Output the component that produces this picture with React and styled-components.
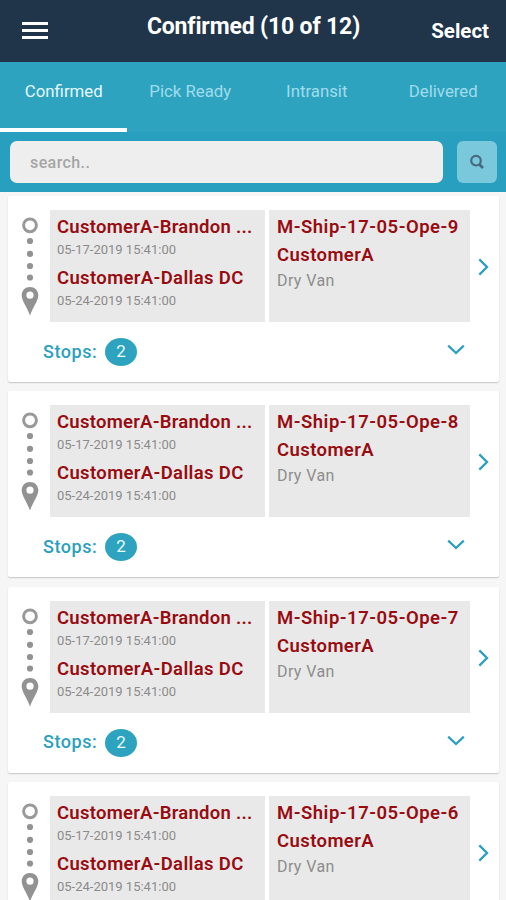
import React from "react";
import styled, { createGlobalStyle } from "styled-components";

const Global = createGlobalStyle`
  *, *::before, *::after { box-sizing: border-box; }
  html, body { margin: 0; height: 100%; overflow: hidden; background: #f6f6f7; }
  button { border: 0; padding: 0; background: none; font: inherit; color: inherit; }
`;

const Screen = styled.div`
  width: 506px;
  height: 900px;
  overflow: hidden;
  display: flex;
  flex-direction: column;
  font-family: Roboto, "Liberation Sans", sans-serif;
  background: #f6f6f7;
`;

const TopBar = styled.header`
  height: 62px;
  flex: none;
  display: grid;
  grid-template-columns: 94px 1fr 94px;
  background: #20344a;
  color: #fff;
`;

const MenuButton = styled.button`
  display: flex;
  flex-direction: column;
  gap: 3.5px;
  padding: 21.5px 0 0 22px;
`;

const MenuLine = styled.span`
  width: 26px;
  height: 3.5px;
  background: #fff;
`;

const Title = styled.h1`
  margin: 0;
  padding: 12px 0 0 1px;
  text-align: center;
  white-space: nowrap;
  font-size: 23px;
  line-height: 30px;
  font-weight: 700;
  letter-spacing: -0.15px;
`;

const SelectButton = styled.button`
  padding: 16px 17px 0 0;
  text-align: right;
  font-size: 20.5px;
  line-height: 30px;
  font-weight: 700;
  align-self: start;
`;

const Tabs = styled.nav`
  height: 70px;
  flex: none;
  display: grid;
  grid-template-columns: repeat(4, 1fr);
  background: #2da3c0;
`;

const Tab = styled.button`
  padding: 0 0 9px 1px;
  font-size: 16.8px;
  color: ${(p) => (p.$active ? "#e6f8fd" : "#a0dcec")};
  border-bottom: 4px solid ${(p) => (p.$active ? "#fff" : "transparent")};
`;

const SearchBar = styled.div`
  height: 60px;
  flex: none;
  display: flex;
  gap: 14px;
  padding: 9px 9px 9px 10px;
  background: #289fbf;
`;

const SearchField = styled.input`
  flex: 1;
  min-width: 0;
  height: 42px;
  padding: 0 20px;
  border: 0;
  border-radius: 7px;
  background: #eee;
  font: 500 16px Roboto, sans-serif;
  letter-spacing: 0.4px;
  &::placeholder { color: #a5a5a5; opacity: 1; }
`;

const SearchButton = styled.button`
  width: 40px;
  height: 42px;
  border-radius: 6px;
  background: #7ac8dc;
  display: flex;
  align-items: center;
  justify-content: center;
`;

const List = styled.main`
  padding: 4px 7px 0 8px;
  display: flex;
  flex-direction: column;
  gap: 9.4px;
`;

const Card = styled.article`
  height: 186px;
  flex: none;
  padding: 14px 7px 0 14px;
  border-radius: 2px;
  background: #fff;
  box-shadow: 0 1px 1.5px rgba(0, 0, 0, 0.2);
`;

const Summary = styled.div`
  height: 112px;
  display: grid;
  grid-template-columns: 28px 215px 4px 201px 1fr;
`;

const Panel = styled.section`
  grid-column: ${(p) => p.$column};
  padding: ${(p) => p.$pad};
  background: #e9e9e9;
  white-space: nowrap;
`;

const Name = styled.div`
  font-size: 18.5px;
  line-height: ${(p) => p.$line || "27px"};
  font-weight: 600;
  letter-spacing: ${(p) => p.$spacing || "0.25px"};
  color: #980c11;
`;

const Stamp = styled.div`
  font-size: 13px;
  line-height: 18px;
  margin-bottom: 6px;
  color: #8b8b8b;
`;

const Equipment = styled.div`
  font-size: 16px;
  line-height: 21px;
  letter-spacing: 0.4px;
  color: #8d8d8d;
`;

const OpenButton = styled.button`
  grid-column: 5;
  display: flex;
  align-items: center;
  justify-content: flex-end;
  padding: 2px 3.5px 0 0;
`;

const StopsRow = styled.div`
  height: 60px;
  display: flex;
  align-items: center;
  padding: 0 27px 0 21px;
`;

const StopsLabel = styled.span`
  width: 62px;
  padding-bottom: 2px;
  font-size: 18px;
  font-weight: 500;
  letter-spacing: 0.55px;
  color: #2b9fbe;
`;

const Count = styled.span`
  width: 32px;
  height: 28px;
  border-radius: 16px / 14px;
  background: #2da3c0;
  color: #e9fbff;
  font-size: 17px;
  line-height: 27px;
  text-align: center;
`;

const ExpandButton = styled.button`
  margin-left: auto;
  display: flex;
  padding-bottom: 5px;
`;

const Route = () => (
  <svg width="16" height="106" viewBox="0 0 16 106" fill="#929292">
    <circle cx="8" cy="15.3" r="6.4" fill="none" stroke="#999" strokeWidth="3" />
    <circle cx="8" cy="31" r="3.1" />
    <circle cx="8" cy="43.8" r="3.1" />
    <circle cx="8" cy="56" r="3.1" />
    <circle cx="8" cy="67.5" r="3.1" />
    <path
      fillRule="evenodd"
      d="M8 77C3.4 77-.3 80.5-.3 85.3C-.3 91 5 97 8 105.5C11 97 16.3 91 16.3 85.3C16.3 80.5 12.6 77 8 77ZM8 81.6A3.6 3.6 0 1 1 8 88.8A3.6 3.6 0 0 1 8 81.6Z"
    />
  </svg>
);

const RouteCell = styled.div`
  svg { display: block; overflow: visible; }
`;

const SearchIcon = () => (
  <svg width="16" height="16" viewBox="0 0 16 16" fill="none" stroke="#496982">
    <circle cx="7" cy="6.7" r="4.8" strokeWidth="2.2" />
    <path d="M10.3 10.2L14 14" strokeWidth="2.8" />
  </svg>
);

const Chevron = ({ down }) => (
  <svg width={down ? 18 : 11} height={down ? 11 : 18} fill="none" stroke="#2b9fbe" strokeWidth="2.3">
    <path d={down ? "M1.2 1.7L9 9L16.8 1.7" : "M1.3 1.4L9 9L1.3 16.6"} />
  </svg>
);

const tabs = ["Confirmed", "Pick Ready", "Intransit", "Delivered"];
const shipments = [9, 8, 7, 6];

const ShipmentCard = ({ number }) => (
  <Card>
    <Summary>
      <RouteCell><Route /></RouteCell>
      <Panel $column="2" $pad="4px 0 0 7px">
        <Name>CustomerA-Brandon ...</Name>
        <Stamp>05-17-2019 15:41:00</Stamp>
        <Name $spacing="0.35px">CustomerA-Dallas DC</Name>
        <Stamp>05-24-2019 15:41:00</Stamp>
      </Panel>
      <Panel $column="4" $pad="4px 0 0 8px">
        <Name $spacing="0.5px">{`M-Ship-17-05-Ope-${number}`}</Name>
        <Name $spacing="0.4px" $line="29px">CustomerA</Name>
        <Equipment>Dry Van</Equipment>
      </Panel>
      <OpenButton aria-label="Open shipment"><Chevron /></OpenButton>
    </Summary>
    <StopsRow>
      <StopsLabel>Stops:</StopsLabel>
      <Count>2</Count>
      <ExpandButton aria-label="Show stops"><Chevron down /></ExpandButton>
    </StopsRow>
  </Card>
);

export default function App() {
  return (
    <>
      <Global />
      <Screen>
        <TopBar>
          <MenuButton aria-label="Menu"><MenuLine /><MenuLine /><MenuLine /></MenuButton>
          <Title>Confirmed (10 of 12)</Title>
          <SelectButton>Select</SelectButton>
        </TopBar>
        <Tabs>
          {tabs.map((name, i) => <Tab key={name} $active={i === 0}>{name}</Tab>)}
        </Tabs>
        <SearchBar>
          <SearchField placeholder="search.." />
          <SearchButton aria-label="Search"><SearchIcon /></SearchButton>
        </SearchBar>
        <List>
          {shipments.map((n) => <ShipmentCard key={n} number={n} />)}
        </List>
      </Screen>
    </>
  );
}
